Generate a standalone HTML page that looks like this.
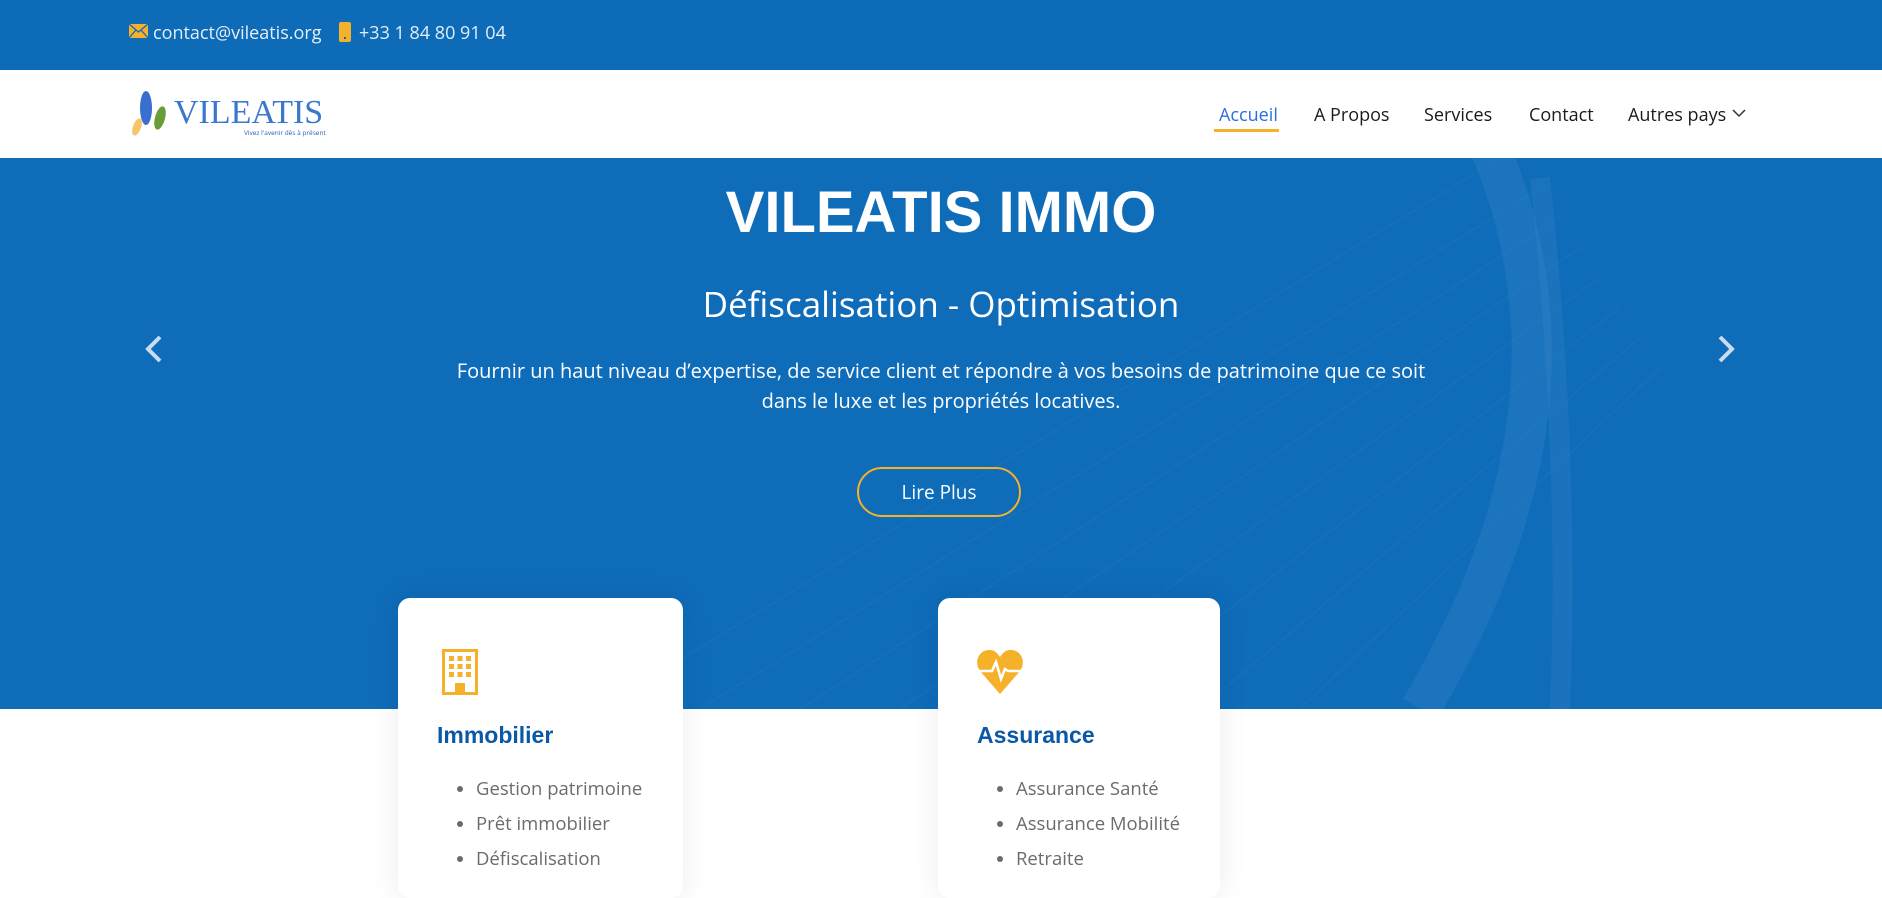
<!DOCTYPE html>
<html><head><meta charset="utf-8"><style>
*{margin:0;padding:0;box-sizing:border-box}
body{width:1882px;height:884px;overflow:hidden;font-family:"Open Sans","Liberation Sans",sans-serif;background:#fff;position:relative}
.top{position:absolute;left:0;top:0;width:1882px;height:70px;background:#0d6bb8;color:#e6eef8;font-size:18px}
.top span{position:absolute;top:21px}
.nav{position:absolute;left:0;top:70px;width:1882px;height:88px;background:#fff}
.nav a{position:absolute;top:33px;font-size:18px;color:#1a1a1a;text-decoration:none}
.hero{position:absolute;left:0;top:158px;width:1882px;height:551px;background:#0f6cb9;overflow:hidden}
.hero h1{position:absolute;top:21px;width:100%;text-align:center;color:#fff;font-size:58px;font-weight:bold;font-family:"Liberation Sans",sans-serif}
.hero h2{position:absolute;top:123px;width:100%;text-align:center;color:#fff;font-size:35px;font-weight:normal}
.hero p{position:absolute;top:198px;left:441px;width:1000px;text-align:center;color:#fff;font-size:20px;line-height:30px}
.btn{position:absolute;left:857px;top:309px;width:164px;height:50px;border:2px solid #f5b12a;border-radius:25px;color:#fff;font-size:19px;text-align:center;line-height:46px}
.arr{position:absolute;top:176px}
.card{position:absolute;top:598px;height:300px;background:#fff;border-radius:12px;box-shadow:0 0 30px rgba(0,0,40,.08)}
.card h3{position:absolute;left:39px;top:124px;color:#0b58a6;font-size:23px;font-family:"Liberation Sans",sans-serif}
.card ul{position:absolute;left:78px;top:173px;color:#6b6b6b;font-size:18.5px;line-height:35px}
</style></head><body>
<div class="top">
<svg style="position:absolute;left:129px;top:24px" width="19" height="14"><rect width="19" height="14" fill="#f5b12a"/><path d="M0 0L9.5 8L19 0M0 14L7 6M19 14L12 6" stroke="#0d6bb8" stroke-width="1.3" fill="none"/></svg>
<span style="left:153px">contact@vileatis.org</span>
<svg style="position:absolute;left:339px;top:22px" width="12" height="20"><rect width="12" height="20" rx="2" fill="#f5b12a"/><rect x="5" y="15" width="2" height="2" fill="#0d6bb8"/></svg>
<span style="left:359px">+33 1 84 80 91 04</span>
</div>
<div class="nav">
<svg style="position:absolute;left:128px;top:17px" width="40" height="52"><ellipse cx="9" cy="40" rx="4" ry="9" fill="#f7c46a" transform="rotate(20 9 40)"/><ellipse cx="18" cy="21" rx="6" ry="17" fill="#3a6fd0"/><ellipse cx="32" cy="31" rx="5" ry="12" fill="#6a9c3a" transform="rotate(15 32 31)"/></svg>
<div style="position:absolute;left:174px;top:24px;font-family:'Liberation Serif',serif;font-size:34px;color:#3a78cf;letter-spacing:0px">VILEATIS</div>
<div style="position:absolute;left:244px;top:58px;font-size:6.5px;color:#2a5fb0">Vivez l'avenir dès à présent</div>
<a style="left:1219px;color:#2a6fdc">Accueil</a>
<div style="position:absolute;left:1214px;top:59px;width:65px;height:3px;background:#f5b12a"></div>
<a style="left:1314px">A Propos</a>
<a style="left:1424px">Services</a>
<a style="left:1529px">Contact</a>
<a style="left:1628px">Autres pays</a>
<svg style="position:absolute;left:1732px;top:39px" width="14" height="9"><path d="M1 1L7 7L13 1" stroke="#333" stroke-width="1.5" fill="none"/></svg>
</div>
<div class="hero">
<svg style="position:absolute;left:0;top:0" width="1882" height="551"><g stroke="#3a86c8" stroke-width="1" opacity=".25"><path d="M600 551L1500 0M700 551L1540 30M800 551L1560 60M900 551L1580 90M1000 551L1600 120M1100 551L1620 150M1200 551L1640 180M1300 551L1660 210"/></g><path d="M1490 -10Q1600 250 1420 551" stroke="#3d88c9" stroke-width="40" fill="none" opacity=".3"/><path d="M1540 20Q1570 300 1560 551" stroke="#3d88c9" stroke-width="20" fill="none" opacity=".25"/></svg>
<h1>VILEATIS IMMO</h1>
<h2>Défiscalisation - Optimisation</h2>
<p>Fournir un haut niveau d’expertise, de service client et répondre à vos besoins de patrimoine que ce soit dans le luxe et les propriétés locatives.</p>
<div class="btn">Lire Plus</div>
<svg class="arr" style="left:144px" width="20" height="30"><path d="M16 3L4 15L16 27" stroke="#c9dcf0" stroke-width="4" fill="none"/></svg>
<svg class="arr" style="left:1716px" width="20" height="30"><path d="M4 3L16 15L4 27" stroke="#c9dcf0" stroke-width="4" fill="none"/></svg>
</div>
<div class="card" style="left:398px;width:285px">
<svg style="position:absolute;left:44px;top:51px" width="36" height="46"><rect x="1.5" y="1.5" width="33" height="43" fill="none" stroke="#f5b12a" stroke-width="3"/><g fill="#f5b12a"><rect x="7" y="7" width="5" height="5"/><rect x="15.5" y="7" width="5" height="5"/><rect x="24" y="7" width="5" height="5"/><rect x="7" y="15" width="5" height="5"/><rect x="15.5" y="15" width="5" height="5"/><rect x="24" y="15" width="5" height="5"/><rect x="7" y="23" width="5" height="5"/><rect x="15.5" y="23" width="5" height="5"/><rect x="24" y="23" width="5" height="5"/><rect x="13" y="34" width="10" height="10"/></g></svg>
<h3>Immobilier</h3>
<ul><li>Gestion patrimoine</li><li>Prêt immobilier</li><li>Défiscalisation</li></ul>
</div>
<div class="card" style="left:938px;width:282px">
<svg style="position:absolute;left:38px;top:51px" width="48" height="46"><path d="M24 45L4 22C-3 12 4 0 14 1C19 1 22 5 24 8C26 5 29 1 34 1C44 0 51 12 44 22Z" fill="#f5b12a"/><path d="M2 22H16L20 13L25 30L29 20L32 22H46" stroke="#fff" stroke-width="2.5" fill="none"/></svg>
<h3>Assurance</h3>
<ul><li>Assurance Santé</li><li>Assurance Mobilité</li><li>Retraite</li></ul>
</div>
</body></html>
